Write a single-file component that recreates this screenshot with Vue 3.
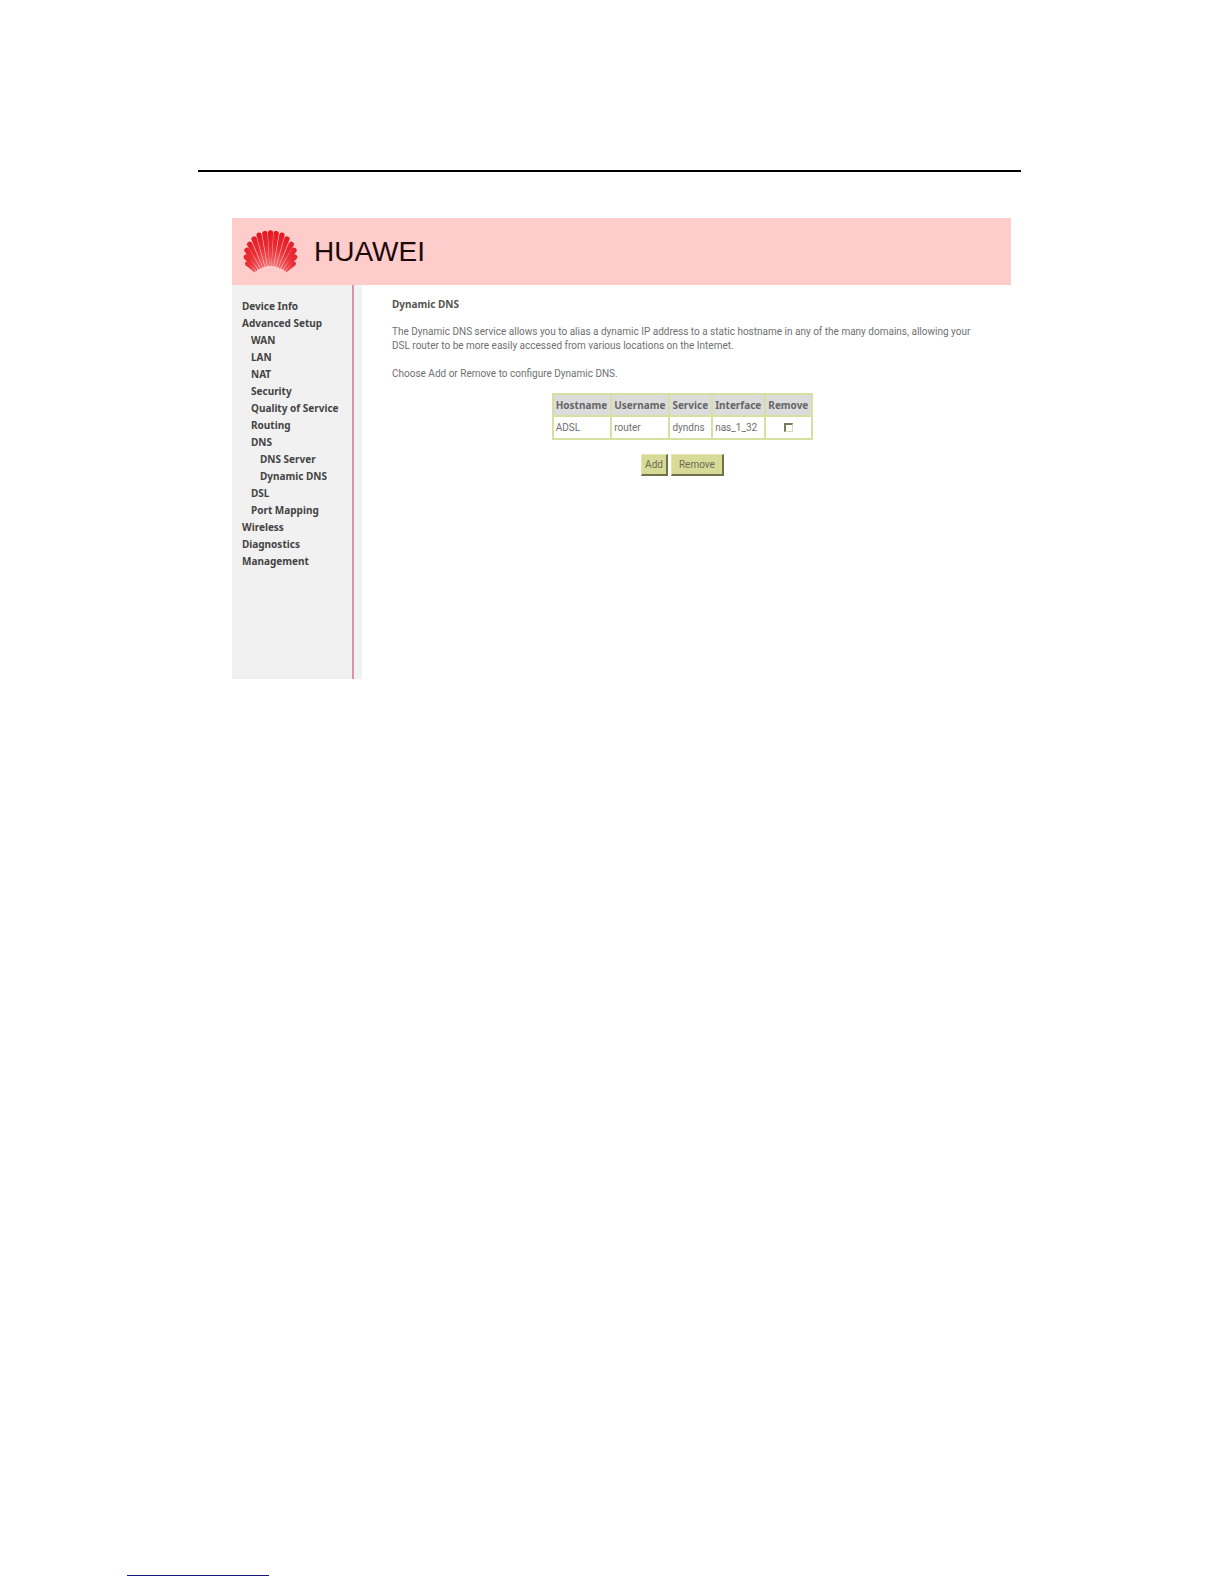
<script setup>
import { ref } from 'vue'

const menu = [
  { label: 'Device Info', level: 0 },
  { label: 'Advanced Setup', level: 0 },
  { label: 'WAN', level: 1 },
  { label: 'LAN', level: 1 },
  { label: 'NAT', level: 1 },
  { label: 'Security', level: 1 },
  { label: 'Quality of Service', level: 1 },
  { label: 'Routing', level: 1 },
  { label: 'DNS', level: 1 },
  { label: 'DNS Server', level: 2 },
  { label: 'Dynamic DNS', level: 2 },
  { label: 'DSL', level: 1 },
  { label: 'Port Mapping', level: 1 },
  { label: 'Wireless', level: 0 },
  { label: 'Diagnostics', level: 0 },
  { label: 'Management', level: 0 },
]

const rows = ref([
  { host: 'ADSL', user: 'router', service: 'dyndns', iface: 'nas_1_32', remove: false },
])

// Shell rays: outer tip x, y and inner end x, y
const rays = [
  [38, 128, 62, 152], [36, 108, 68, 148], [38, 88, 75, 144], [46, 70, 82, 141],
  [59, 54, 88, 138], [74, 43, 95, 136], [91, 38, 102, 135], [108, 36, 108, 135],
  [125, 38, 114, 135], [142, 43, 121, 136], [157, 54, 128, 138], [170, 70, 134, 141],
  [178, 88, 141, 144], [180, 108, 148, 148], [178, 128, 154, 152],
]
const petals = rays.map(([ox, oy, ix, iy]) => {
  const len = Math.hypot(ox - ix, oy - iy)
  const half = len > 45 ? 8 : 6
  const px = (-(oy - iy) / len) * half
  const py = ((ox - ix) / len) * half
  const near = 0.35
  return `M${ix + px * near} ${iy + py * near}L${ox + px} ${oy + py}A${half} ${half} 0 0 0 ${ox - px} ${oy - py}L${ix - px * near} ${iy - py * near}Z`
})
</script>

<template>
  <div class="page">
    <hr class="rule" />
    <div class="panel">
      <header class="banner">
        <svg class="logo" viewBox="23 25 170 136" aria-hidden="true">
          <defs>
            <radialGradient id="shell" gradientUnits="userSpaceOnUse" cx="108" cy="150" r="124">
              <stop offset="0" stop-color="#f58a8a" />
              <stop offset="0.55" stop-color="#ea3038" />
              <stop offset="1" stop-color="#e41420" />
            </radialGradient>
          </defs>
          <path v-for="(d, i) in petals" :key="i" :d="d" fill="url(#shell)" />
        </svg>
        <span class="brand">HUAWEI</span>
      </header>
      <div class="body">
        <nav class="side">
          <ul>
            <li v-for="m in menu" :key="m.label" :class="'level' + m.level">
              <a href="#">{{ m.label }}</a>
            </li>
          </ul>
        </nav>
        <main class="content">
          <h1>Dynamic DNS</h1>
          <p>
            The Dynamic DNS service allows you to alias a dynamic IP address to a static hostname in any of the many domains, allowing your DSL router to be more easily accessed from various locations on the Internet.
          </p>
          <p>Choose Add or Remove to configure Dynamic DNS.</p>
          <table>
            <thead>
              <tr>
                <th>Hostname</th>
                <th>Username</th>
                <th>Service</th>
                <th>Interface</th>
                <th>Remove</th>
              </tr>
            </thead>
            <tbody>
              <tr v-for="r in rows" :key="r.host">
                <td>{{ r.host }}</td>
                <td>{{ r.user }}</td>
                <td>{{ r.service }}</td>
                <td>{{ r.iface }}</td>
                <td class="pick">
                  <input v-model="r.remove" type="checkbox" :aria-label="'Remove ' + r.host" />
                </td>
              </tr>
            </tbody>
          </table>
          <div class="actions">
            <button type="button">Add</button>
            <button type="button" class="wide">Remove</button>
          </div>
        </main>
      </div>
    </div>
    <footer><hr class="foot" /></footer>
  </div>
</template>

<style>
body {
  margin: 0;
  background: #fff;
}
</style>

<style scoped>
.page {
  box-sizing: border-box;
  min-height: 100vh;
  padding: 170px 203px 8px 198px;
  display: flex;
  flex-direction: column;
  font: 10px/14px Roboto, sans-serif;
  color: #707070;
}
.rule {
  width: 100%;
  height: 2px;
  margin: 0 0 46px;
  border: 0;
  background: #000;
}
.panel {
  margin: 0 10px 0 34px;
}
.banner {
  display: flex;
  align-items: center;
  gap: 15px;
  height: 67px;
  padding-left: 10px;
  background: #fecccb;
}
.logo {
  width: 57px;
  height: 46px;
}
.brand {
  font: 28px/32px "Liberation Sans", Arial, sans-serif;
  color: #1c0a0a;
}
.body {
  display: flex;
}
.side {
  box-sizing: border-box;
  flex: 0 0 130px;
  min-height: 394px;
  padding: 13px 0 20px 10px;
  background: linear-gradient(to right, #f1f1f1 120px, #d795a6 120px, #d795a6 122px, #f1f3f3 122px);
}
.side ul {
  margin: 0;
  padding: 0;
  list-style: none;
}
.side li {
  font-family: "Noto Sans", sans-serif;
  line-height: 17px;
  font-weight: 700;
  white-space: nowrap;
}
.side a {
  color: #444;
  text-decoration: none;
}
.level1 {
  padding-left: 9px;
}
.level2 {
  padding-left: 18px;
}
.content {
  flex: 1;
  min-width: 0;
  padding: 12px 38px 0 30px;
}
h1 {
  margin: 0 0 14px;
  font: 700 10px/14px "Noto Sans", sans-serif;
  color: #555;
}
p {
  margin: 0 0 14px;
}
p + p {
  margin-bottom: 12px;
}
table {
  margin: 0 auto;
  border-collapse: collapse;
  border: 2px solid #d9dfa0;
}
th,
td {
  height: 20px;
  padding: 0 3px 0 2px;
  border: 2px solid #d9dfa0;
  text-align: left;
}
td {
  height: 21px;
}
th {
  background: #dcdcdc;
  font-family: "Noto Sans", sans-serif;
  color: #666;
}
.pick {
  text-align: center;
}
input {
  appearance: none;
  display: block;
  width: 9px;
  height: 9px;
  margin: 0 auto;
  border: 1px solid #d8d8c0;
  border-top: 2px solid #77775a;
  border-left: 2px solid #77775a;
  background: #fff;
}
input:checked {
  background: #77775a;
}
.actions {
  display: flex;
  justify-content: center;
  gap: 3px;
  margin-top: 14px;
}
button {
  height: 22px;
  padding: 0 3px;
  border: 1px solid #e3e6b4;
  border-right: 2px solid #6f7148;
  border-bottom: 2px solid #6f7148;
  background: #d8db98;
  font: inherit;
  color: #6b6b52;
}
.wide {
  padding: 0 7px;
}
footer {
  margin: auto 0 0 -71px;
}
.foot {
  width: 142px;
  height: 1px;
  margin: 0;
  border: 0;
  background: #15157f;
}
</style>
